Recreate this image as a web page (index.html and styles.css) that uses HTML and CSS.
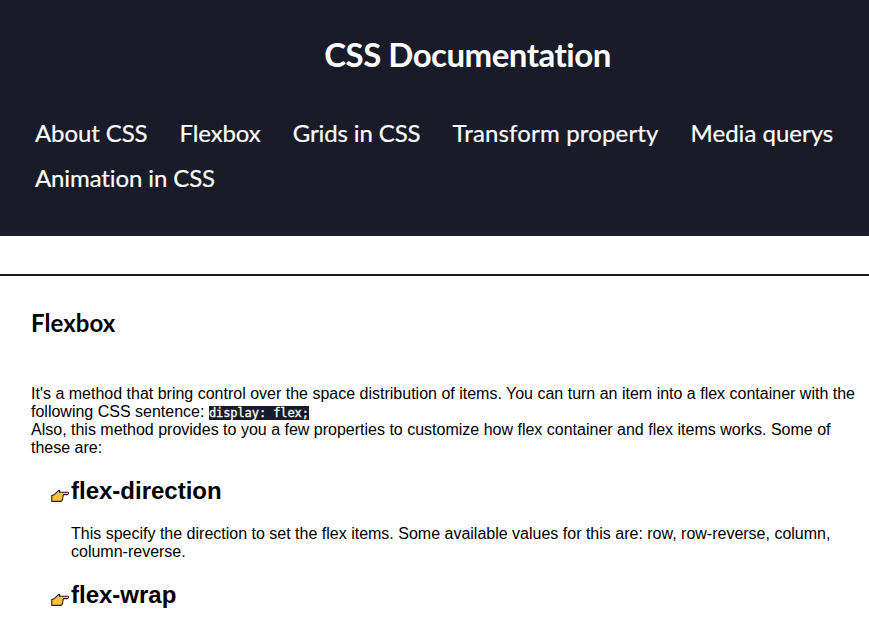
FILE: index.html
```html
<!DOCTYPE html>
<html lang="en">
<head>
<meta charset="utf-8">
<title>CSS Documentation</title>
<link rel="stylesheet" href="styles.css">
</head>
<body>
<svg class="defs" width="0" height="0"><symbol id="hand" viewBox="0 0 20 16"><path d="M1.8 8.3H3.4L8.2 3.8Q9.6 2.8 9.8 4L9.4 5.2H17.4Q18.7 5.3 18.5 6.5Q18.3 7.6 17.2 7.6H13.4L12.5 12.5Q12 14.4 10.2 14.4H1.8Z" fill="#fdc236" stroke="#26221c" stroke-width="1.1" stroke-linejoin="round"/></symbol></svg>
<header class="header">
<h1 class="title">CSS Documentation</h1>
<nav class="nav"><a class="tight">About CSS</a><a class="tight">Flexbox</a><a class="tight">Grids in CSS</a><a class="wide">Transform property</a><a>Media querys</a><a class="tight">Animation in CSS</a></nav>
</header>
<main class="section">
<h2 class="section-title">Flexbox</h2>
<p class="text">It's a method that bring control over the space distribution of items. You can turn an item into a flex container with the following CSS sentence: <code>display: flex;</code><br>Also, this method provides to you a few properties to customize how flex container and flex items works. Some of these are:</p>
<ul class="list">
<li><h3><svg class="hand"><use href="#hand"/></svg>flex-direction</h3><p>This specify the direction to set the flex items. Some available values for this are: row, row-reverse, column, column-reverse.</p></li>
<li><h3><svg class="hand"><use href="#hand"/></svg>flex-wrap</h3></li>
</ul>
</main>
</body>
</html>
```
FILE: styles.css
```css
* { box-sizing: border-box; }
html { overflow: hidden; }
body { margin: 0; font: 16px/18px "Liberation Sans", sans-serif; color: #000; background: #fff; }
.defs { position: absolute; }
.header { height: 236px; background: #1a1b28; color: #fff; font-family: Lato, sans-serif; font-variant-ligatures: none; padding-top: 34px; }
.title { margin: 0 0 0 66px; text-align: center; font-size: 33px; line-height: 40px; font-weight: 700; letter-spacing: -.5px; }
.nav { display: flex; flex-wrap: wrap; column-gap: 32px; padding: 36px 32px 0 35px; font-size: 24px; line-height: 45px; -webkit-text-stroke: .2px #fff; }
.tight { letter-spacing: -.11px; }
.wide { letter-spacing: .16px; }
.section { margin-top: 38px; border-top: 2px solid #1a1b28; padding: 32px 12px 0 31px; }
.section-title { margin: 0; font: 700 24px/29px Lato, sans-serif; letter-spacing: .05px; }
.text { margin: 48px 0 0; }
code { font: 12px/14px "DejaVu Sans Mono", monospace; letter-spacing: -.08px; background: #1a1b28; color: #fff; -webkit-text-stroke: .3px #fff; }
.list { list-style: none; margin: 0; padding: 0 0 0 40px; }
.list h3 { position: relative; margin: 20px 0; font-size: 24px; line-height: 28px; }
.list p { margin: 0; }
.hand { position: absolute; left: -21px; top: 10px; width: 20px; height: 16px; }
```
